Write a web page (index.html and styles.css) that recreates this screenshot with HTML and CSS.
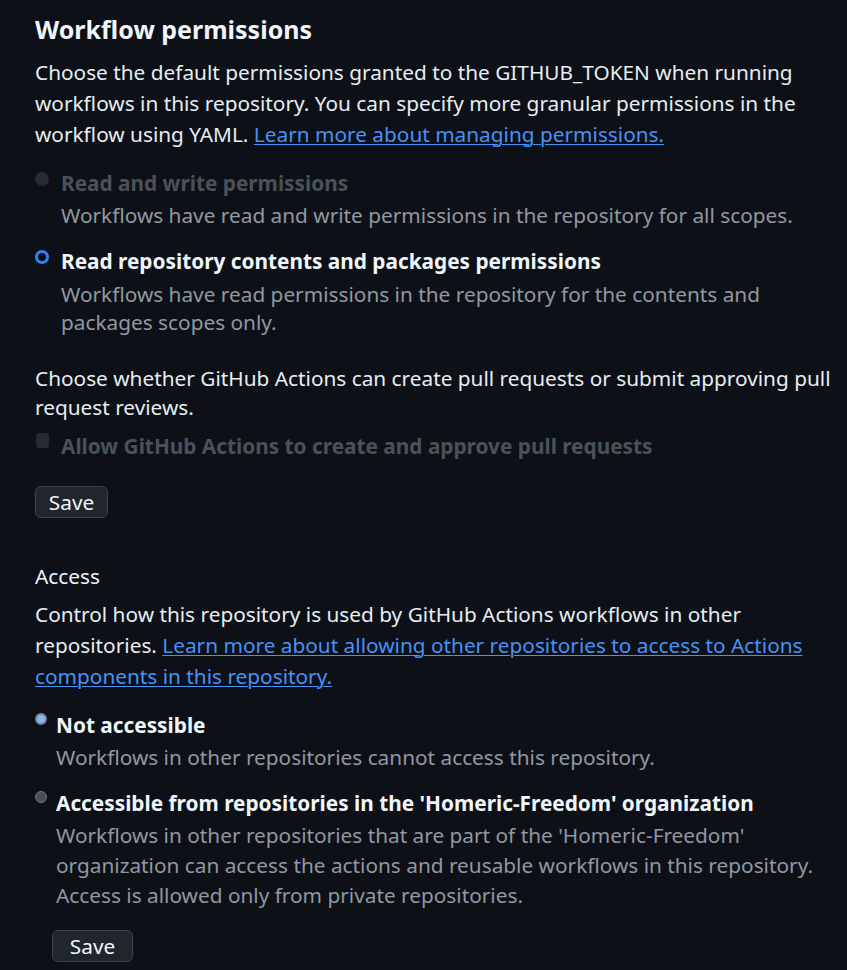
FILE: index.html
```html
<!DOCTYPE html>
<html>
<head>
<meta charset="utf-8">
<link rel="stylesheet" href="styles.css">
</head>
<body>
<main class="page">
  <h2 class="title">Workflow permissions</h2>
  <p class="para">Choose the default permissions granted to the GITHUB_TOKEN when running workflows in this repository. You can specify more granular permissions in the workflow using YAML. <a class="link" href="#">Learn more about managing permissions.</a></p>

  <div class="option disabled opt-first">
    <span class="radio radio-disabled"></span>
    <div class="opt-body">
      <div class="opt-label">Read and write permissions</div>
      <div class="opt-desc">Workflows have read and write permissions in the repository for all scopes.</div>
    </div>
  </div>

  <div class="option opt-second">
    <span class="radio radio-checked"></span>
    <div class="opt-body">
      <div class="opt-label">Read repository contents and packages permissions</div>
      <div class="opt-desc tight">Workflows have read permissions in the repository for the contents and packages scopes only.</div>
    </div>
  </div>

  <p class="para para-pr">Choose whether GitHub Actions can create pull requests or submit approving pull request reviews.</p>

  <div class="option disabled opt-check">
    <span class="checkbox"></span>
    <div class="opt-body">
      <div class="opt-label">Allow GitHub Actions to create and approve pull requests</div>
    </div>
  </div>

  <button class="btn btn-first">Save</button>

  <h3 class="subtitle">Access</h3>
  <p class="para">Control how this repository is used by GitHub Actions workflows in other repositories. <a class="link" href="#">Learn more about allowing other repositories to access to Actions components in this repository.</a></p>

  <div class="option small">
    <span class="sradio sradio-on"></span>
    <div class="opt-body">
      <div class="opt-label">Not accessible</div>
      <div class="opt-desc">Workflows in other repositories cannot access this repository.</div>
    </div>
  </div>

  <div class="option small opt-org">
    <span class="sradio sradio-off"></span>
    <div class="opt-body">
      <div class="opt-label">Accessible from repositories in the 'Homeric-Freedom' organization</div>
      <div class="opt-desc">Workflows in other repositories that are part of the 'Homeric-Freedom' organization can access the actions and reusable workflows in this repository. Access is allowed only from private repositories.</div>
      <button class="btn btn-second">Save</button>
    </div>
  </div>
</main>
</body>
</html>
```

FILE: styles.css
```css
html, body {
  margin: 0;
  padding: 0;
  background: #0d1117;
}
body {
  font-family: "Noto Sans", "Open Sans", sans-serif;
  color: #e6edf3;
  font-size: 20.8px;
}
.page {
  padding: 9px 10px 0 35px;
}
.title {
  margin: 0;
  font-size: 25px;
  font-weight: 700;
  line-height: 40px;
  color: #f0f6fc;
}
.para {
  margin: 0;
  line-height: 31px;
  padding-top: 8px;
  color: #e6edf3;
}
.link {
  color: #4493f8;
  text-decoration: underline;
  text-decoration-thickness: 1px;
  text-underline-offset: 2px;
}
.option {
  display: flex;
  align-items: flex-start;
}
.opt-first {
  margin-top: 18px;
}
.opt-second {
  margin-top: 16px;
}
.opt-body {
  display: flex;
  flex-direction: column;
}
.opt-label {
  font-weight: 700;
  line-height: 30px;
  color: #f0f6fc;
}
.opt-desc {
  color: #9198a1;
  line-height: 30px;
  margin-top: 2px;
}
.opt-desc.tight {
  line-height: 28px;
  margin-top: 4px;
}
.disabled .opt-label {
  color: #4b5159;
}
.radio {
  flex: none;
  width: 14px;
  height: 14px;
  border-radius: 50%;
  margin: 4px 12px 0 0;
  box-sizing: border-box;
}
.radio-disabled {
  background: #262b33;
}
.radio-checked {
  border: 3.5px solid #2f81f7;
  background: #0d1117;
}
.para-pr {
  margin-top: 20px;
  line-height: 29px;
}
.opt-check {
  margin-top: 9px;
}
.checkbox {
  flex: none;
  width: 13px;
  height: 15px;
  border-radius: 3px;
  background: #262b33;
  margin: 2px 12px 0 1px;
}
.btn {
  display: block;
  font-family: "Noto Sans", "Open Sans", sans-serif;
  font-size: 20.8px;
  line-height: 30px;
  color: #f0f6fc;
  background: #21262d;
  border: 1px solid #3d444d;
  border-radius: 6px;
  padding: 0 12px;
  cursor: pointer;
}
.btn-first {
  margin-top: 25px;
  width: 73px;
}
.subtitle {
  margin: 43px 0 0;
  font-size: 20.8px;
  font-weight: 400;
  line-height: 30px;
  color: #f0f6fc;
}
.small {
  margin-top: 18px;
}
.sradio {
  flex: none;
  width: 12px;
  height: 12px;
  border-radius: 50%;
  box-sizing: border-box;
  margin: 3px 9px 0 0;
}
.sradio-on {
  background: #8ab4f8;
  border: 2px solid #7d8590;
}
.sradio-off {
  background: #4a4f55;
  border: 1px solid #6e7681;
}
.opt-org {
  margin-top: 16px;
}
.btn-second {
  margin-top: 20px;
  margin-left: -4px;
  width: 81px;
}
```
